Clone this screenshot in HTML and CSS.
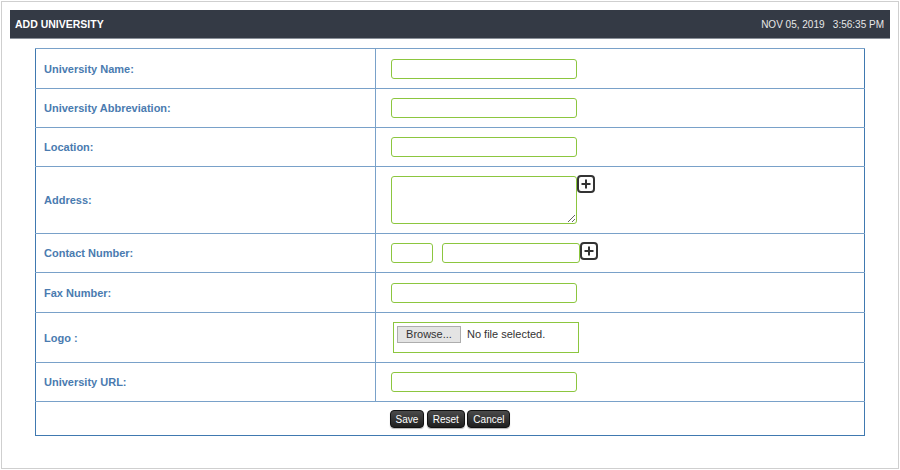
FILE: index.html
```html
<!DOCTYPE html>
<html lang="en">
<head>
    <meta charset="UTF-8">
    <title>Add University</title>
    <link rel="stylesheet" href="styles.css">
</head>
<body>
    <div id="wrapper">
        <div class="page-head">
            <span class="page-title">ADD UNIVERSITY</span>
            <span class="page-date">NOV 05, 2019&nbsp;&nbsp; 3:56:35 PM</span>
        </div>
        <form action="#" method="post">
            <table class="form-table">
                <tr class="row-std row-tall">
                    <td class="lbl">University Name:</td>
                    <td class="fld"><input type="text" class="txt" name="name"></td>
                </tr>
                <tr class="row-std">
                    <td class="lbl">University Abbreviation:</td>
                    <td class="fld"><input type="text" class="txt" name="abbr"></td>
                </tr>
                <tr class="row-std">
                    <td class="lbl">Location:</td>
                    <td class="fld"><input type="text" class="txt" name="location"></td>
                </tr>
                <tr class="row-address">
                    <td class="lbl">Address:</td>
                    <td class="fld top">
                        <div class="with-add">
                            <textarea class="txt area" name="address"></textarea>
                            <span class="add-btn">
                                <svg width="18" height="18" viewBox="0 0 18 18"><rect x="1" y="1" width="16" height="16" rx="3" fill="#fff" stroke="#333" stroke-width="2"/><path d="M9 4.5v9M4.5 9h9" stroke="#333" stroke-width="2"/></svg>
                            </span>
                        </div>
                    </td>
                </tr>
                <tr class="row-std">
                    <td class="lbl">Contact Number:</td>
                    <td class="fld">
                        <div class="with-add">
                            <input type="text" class="txt code" name="code">
                            <input type="text" class="txt phone" name="phone">
                            <span class="add-btn">
                                <svg width="18" height="18" viewBox="0 0 18 18"><rect x="1" y="1" width="16" height="16" rx="3" fill="#fff" stroke="#333" stroke-width="2"/><path d="M9 4.5v9M4.5 9h9" stroke="#333" stroke-width="2"/></svg>
                            </span>
                        </div>
                    </td>
                </tr>
                <tr class="row-std row-tall">
                    <td class="lbl">Fax Number:</td>
                    <td class="fld"><input type="text" class="txt" name="fax"></td>
                </tr>
                <tr class="row-logo">
                    <td class="lbl">Logo :</td>
                    <td class="fld">
                        <label class="file-box">
                            <span class="browse">Browse...</span>
                            <span class="file-name">No file selected.</span>
                        </label>
                    </td>
                </tr>
                <tr class="row-std">
                    <td class="lbl">University URL:</td>
                    <td class="fld"><input type="text" class="txt" name="url"></td>
                </tr>
                <tr class="row-actions">
                    <td colspan="2">
                        <button type="submit" class="btn">Save</button>
                        <button type="reset" class="btn">Reset</button>
                        <button type="button" class="btn">Cancel</button>
                    </td>
                </tr>
            </table>
        </form>
    </div>
</body>
</html>
```

FILE: styles.css
```css
body {
    margin: 0;
    padding: 0;
    background-color: #fff;
    font-family: "Liberation Sans", Arial, sans-serif;
}

#wrapper {
    margin: 1px 1px 0 1px;
    height: 458px;
    padding: 8px 8px 0 8px;
    border: 1px solid #cfcfcf;
}

.page-head {
    display: flex;
    justify-content: space-between;
    align-items: center;
    height: 28px;
    padding: 0 6px 0 5px;
    background-color: #343a45;
    border-bottom: 1px solid #8a9099;
    color: #fff;
}

.page-title {
    font-size: 10.5px;
    font-weight: bold;
}

.page-date {
    font-size: 10px;
    color: #e8e8e8;
}

.form-table {
    width: 830px;
    margin: 9px auto 0 auto;
    border-collapse: collapse;
    border: 1px solid #4079b0;
}

.form-table td {
    border-top: 1px solid #79a1c9;
    padding: 0;
}

.lbl {
    width: 331px;
    padding-left: 8px !important;
    border-right: 1px solid #79a1c9;
    font-size: 11px;
    font-weight: bold;
    color: #4a7bb0;
    vertical-align: middle;
}

.fld {
    padding-left: 15px !important;
    vertical-align: middle;
}

.fld.top {
    vertical-align: top;
    padding-top: 9px !important;
}

.row-std td {
    height: 38px;
}

.row-tall td {
    height: 39px;
}

.row-address td {
    height: 57px;
}

.row-logo td {
    height: 49px;
}

.row-actions td {
    height: 33px;
    text-align: center;
    vertical-align: middle;
}

.txt {
    box-sizing: border-box;
    width: 186px;
    height: 20px;
    margin: 0;
    padding: 2px 4px;
    border: 1px solid #8cc63f;
    border-radius: 3px;
    font-family: "Liberation Sans", Arial, sans-serif;
    font-size: 11px;
    vertical-align: middle;
}

.area {
    height: 48px;
    display: block;
}

.with-add {
    display: flex;
    align-items: flex-start;
}

.code {
    width: 42px;
    margin-right: 9px;
}

.phone {
    width: 138px;
}

.add-btn {
    display: block;
    width: 18px;
    height: 18px;
    margin-top: -1px;
}

.add-btn svg {
    display: block;
}

.file-box {
    box-sizing: border-box;
    display: flex;
    align-items: flex-start;
    width: 186px;
    height: 31px;
    margin-left: 2px;
    padding: 3px 0 0 3px;
    border: 1px solid #8cc63f;
    font-size: 11px;
    color: #333;
}

.browse {
    box-sizing: border-box;
    width: 64px;
    height: 17px;
    line-height: 15px;
    text-align: center;
    background-color: #e4e4e4;
    border: 1px solid #adadad;
    font-size: 11px;
}

.file-name {
    margin-left: 6px;
    line-height: 17px;
}

.btn {
    height: 18px;
    padding: 0 5px;
    margin: 0 -1px;
    border: 1px solid #111;
    border-radius: 4px;
    background: linear-gradient(#4a4a4a, #1f1f1f);
    color: #fff;
    font-family: "Liberation Sans", Arial, sans-serif;
    font-size: 10px;
    box-shadow: 0 1px 1px rgba(0, 0, 0, 0.3);
    cursor: pointer;
}
```
